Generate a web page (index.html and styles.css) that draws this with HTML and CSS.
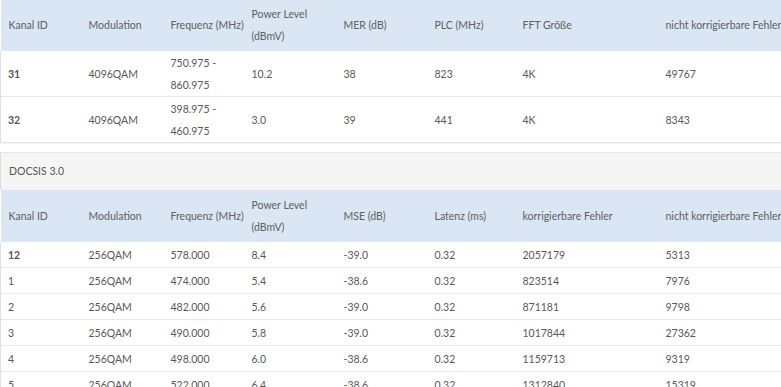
FILE: index.html
```html
<!DOCTYPE html>
<html lang="de">
<head>
<meta charset="utf-8">
<title>DOCSIS Kanäle</title>
<link rel="stylesheet" href="styles.css">
</head>
<body>
<div class="page">
  <section class="panel panel-first">
    <table class="chan">
      <colgroup>
        <col class="c1"><col class="c2"><col class="c3"><col class="c4"><col class="c5"><col class="c6"><col class="c7"><col class="c8">
      </colgroup>
      <thead>
        <tr>
          <th>Kanal ID</th><th>Modulation</th><th>Frequenz (MHz)</th><th>Power Level<br>(dBmV)</th><th>MER (dB)</th><th>PLC (MHz)</th><th>FFT Größe</th><th>nicht korrigierbare Fehler</th>
        </tr>
      </thead>
      <tbody class="tall">
        <tr><td class="id">31</td><td>4096QAM</td><td>750.975 -<br>860.975</td><td>10.2</td><td>38</td><td>823</td><td>4K</td><td>49767</td></tr>
        <tr><td class="id">32</td><td>4096QAM</td><td>398.975 -<br>460.975</td><td>3.0</td><td>39</td><td>441</td><td>4K</td><td>8343</td></tr>
      </tbody>
    </table>
  </section>

  <section class="panel">
    <div class="panel-heading">DOCSIS 3.0</div>
    <table class="chan">
      <colgroup>
        <col class="c1"><col class="c2"><col class="c3"><col class="c4"><col class="c5"><col class="c6"><col class="c7"><col class="c8">
      </colgroup>
      <thead>
        <tr>
          <th>Kanal ID</th><th>Modulation</th><th>Frequenz (MHz)</th><th>Power Level<br>(dBmV)</th><th>MSE (dB)</th><th>Latenz (ms)</th><th>korrigierbare Fehler</th><th>nicht korrigierbare Fehler</th>
        </tr>
      </thead>
      <tbody>
        <tr><td class="id">12</td><td>256QAM</td><td>578.000</td><td>8.4</td><td>-39.0</td><td>0.32</td><td>2057179</td><td>5313</td></tr>
        <tr><td>1</td><td>256QAM</td><td>474.000</td><td>5.4</td><td>-38.6</td><td>0.32</td><td>823514</td><td>7976</td></tr>
        <tr><td>2</td><td>256QAM</td><td>482.000</td><td>5.6</td><td>-39.0</td><td>0.32</td><td>871181</td><td>9798</td></tr>
        <tr><td>3</td><td>256QAM</td><td>490.000</td><td>5.8</td><td>-39.0</td><td>0.32</td><td>1017844</td><td>27362</td></tr>
        <tr><td>4</td><td>256QAM</td><td>498.000</td><td>6.0</td><td>-38.6</td><td>0.32</td><td>1159713</td><td>9319</td></tr>
        <tr><td>5</td><td>256QAM</td><td>522.000</td><td>6.4</td><td>-38.6</td><td>0.32</td><td>1312840</td><td>15319</td></tr>
      </tbody>
    </table>
  </section>
</div>
</body>
</html>
```

FILE: styles.css
```css
html, body {
  margin: 0;
  padding: 0;
  background: #ffffff;
  overflow: hidden;
}

body {
  font-family: "Source Sans Pro", Lato, "Liberation Sans", sans-serif;
  font-size: 10.5px;
  color: #585858;
}

.page {
  width: 820px;
  margin-top: -1px;
}

.panel {
  border-bottom: 1px solid #e3e3e3;
  box-shadow: 0 1px 1px rgba(0, 0, 0, 0.04);
  margin-bottom: 9px;
}

.panel-heading {
  background: #f5f5f5;
  border-top: 1px solid #e6e6e6;
  border-left: 1px solid #dddddd;
  padding: 0 8px;
  line-height: 37px;
  color: #555555;
}

.chan {
  width: 820px;
  table-layout: fixed;
  border-collapse: collapse;
}

.c1 { width: 80px; }
.c2 { width: 82px; }
.c3 { width: 81px; }
.c4 { width: 92px; }
.c5 { width: 91px; }
.c6 { width: 88px; }
.c7 { width: 143px; }
.c8 { width: 163px; }

.chan th {
  background: #dae6f3;
  font-weight: normal;
  text-align: left;
  color: #606060;
  padding: 4px 8px;
  line-height: 22px;
  white-space: nowrap;
  vertical-align: middle;
}

.chan td {
  border-top: 1px solid #e8e8e8;
  padding: 2px 8px 1px;
  line-height: 22px;
  white-space: nowrap;
  vertical-align: middle;
}

.chan td:first-child {
  border-left: 1px solid #e0e0e0;
  padding-left: 7px;
}

.chan .tall td {
  padding-top: 1px;
  padding-bottom: 0;
}

.chan tbody tr:first-child td {
  border-top: none;
}

.chan td.id {
  font-weight: 700;
}
```
